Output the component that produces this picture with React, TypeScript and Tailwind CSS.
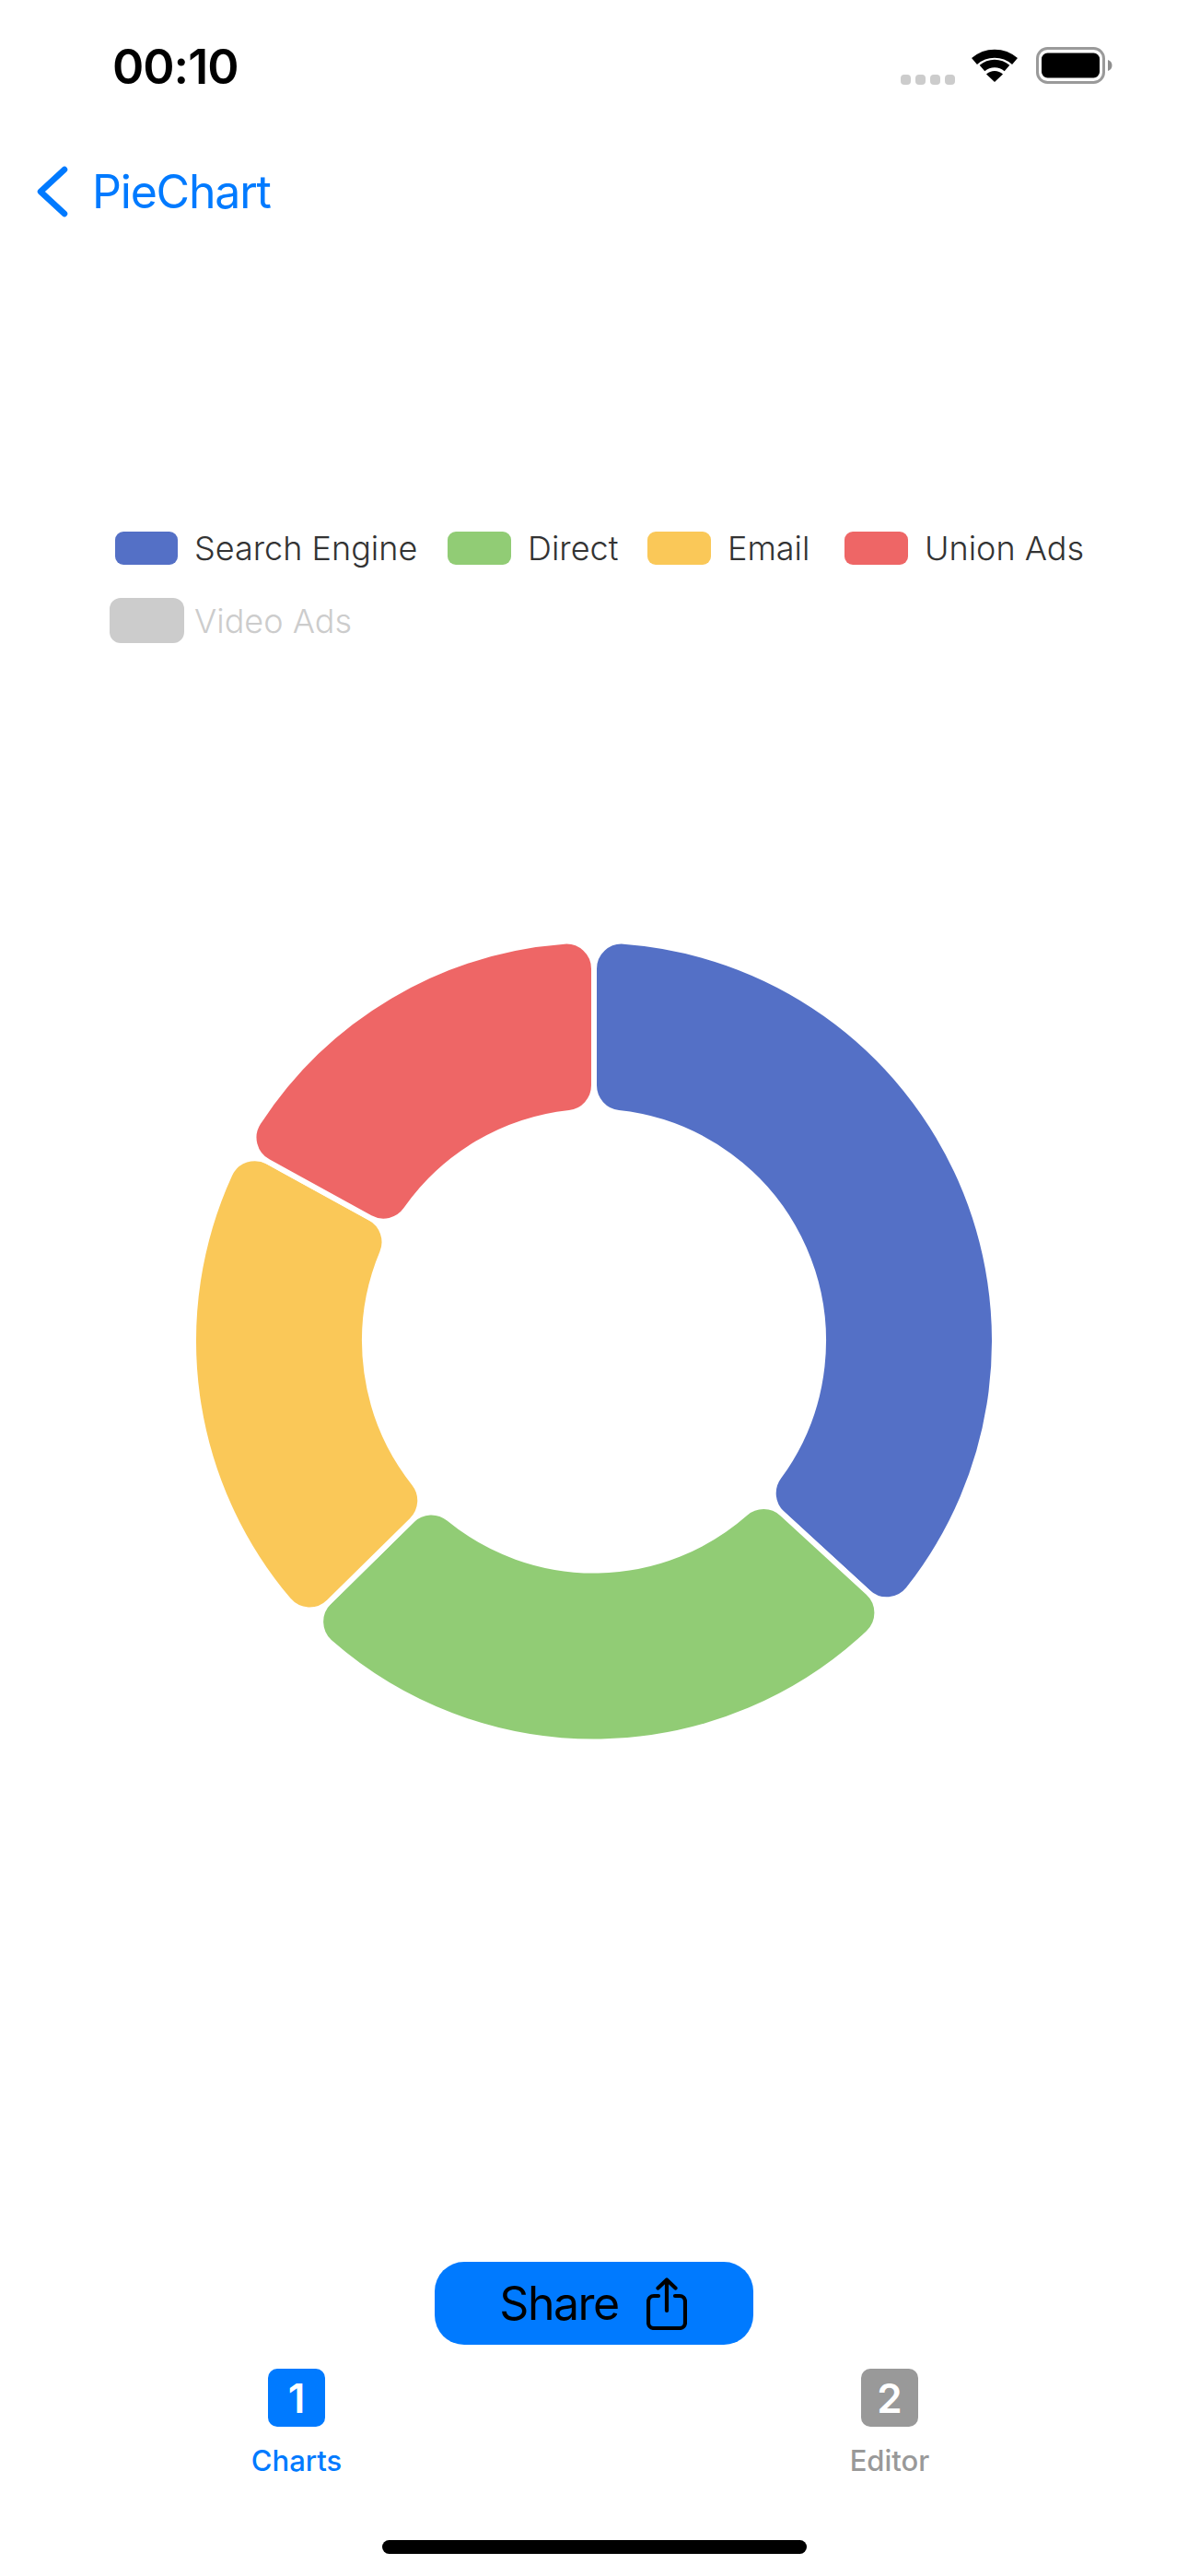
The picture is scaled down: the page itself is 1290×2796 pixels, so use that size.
const slices = [
  { color: "#5470c6", from: 0, to: 132.52 },
  { color: "#91cc75", from: 132.52, to: 225.46 },
  { color: "#fac858", from: 225.46, to: 298.8 },
  { color: "#ee6666", from: 298.8, to: 360 },
];

const CX = 645;
const CY = 499.5;
const R = 435;
const INNER = 249;
const CORNER = 30;

const pt = (radius: number, deg: number) => {
  const a = (deg * Math.PI) / 180;
  return `${(CX + radius * Math.sin(a)).toFixed(2)} ${(CY - radius * Math.cos(a)).toFixed(2)}`;
};

// annular sector with rounded corners, angles in degrees clockwise from 12 o'clock
const sectorPath = (from: number, to: number) => {
  const dOut = R - CORNER;
  const dIn = INNER + CORNER;
  const dO = (Math.asin(CORNER / dOut) * 180) / Math.PI;
  const dI = (Math.asin(CORNER / dIn) * 180) / Math.PI;
  const edgeO = Math.sqrt(dOut * dOut - CORNER * CORNER);
  const edgeI = Math.sqrt(dIn * dIn - CORNER * CORNER);
  const big = to - from > 180 ? 1 : 0;
  return [
    `M ${pt(edgeO, from)}`,
    `A ${CORNER} ${CORNER} 0 0 1 ${pt(R, from + dO)}`,
    `A ${R} ${R} 0 ${big} 1 ${pt(R, to - dO)}`,
    `A ${CORNER} ${CORNER} 0 0 1 ${pt(edgeO, to)}`,
    `L ${pt(edgeI, to)}`,
    `A ${CORNER} ${CORNER} 0 0 1 ${pt(INNER, to - dI)}`,
    `A ${INNER} ${INNER} 0 ${big} 0 ${pt(INNER, from + dI)}`,
    `A ${CORNER} ${CORNER} 0 0 1 ${pt(edgeI, from)}`,
    "Z",
  ].join(" ");
};

const Wifi = () => (
  <svg width="50" height="38" viewBox="0 0 50 38" fill="none">
    <path d="M3 15.5 A33.5 33.5 0 0 1 47 15.5" stroke="#000" strokeWidth="9" />
    <path d="M11.5 23 A20.5 20.5 0 0 1 38.5 23" stroke="#000" strokeWidth="8.5" />
    <path d="M25 38 L16 29.5 A13 13 0 0 1 34 29.5 Z" fill="#000" />
  </svg>
);

const Battery = () => (
  <svg width="83" height="40" viewBox="0 0 83 40" fill="none">
    <rect x="1.5" y="1.5" width="72" height="37" rx="11" stroke="#9a9a9a" strokeWidth="3" />
    <rect x="6" y="6.5" width="63" height="27" rx="6.5" fill="#000" />
    <path d="M78 14 C81 15 82.5 17 82.5 20 C82.5 23 81 25 78 26 Z" fill="#8e8e8e" />
  </svg>
);

const ShareIcon = () => (
  <svg width="44" height="57" viewBox="0 0 44 57" fill="none" stroke="#000" strokeWidth="4.2" strokeLinecap="round" strokeLinejoin="round">
    <path d="M13 20 H8 a6 6 0 0 0 -6 6 V49 a6 6 0 0 0 6 6 H36 a6 6 0 0 0 6 -6 V26 a6 6 0 0 0 -6 -6 H31" />
    <path d="M22 36 V3" />
    <path d="M12.5 11.5 L22 2.5 L31.5 11.5" />
  </svg>
);

const App = () => {
  return (
    <div className="w-[1290px] h-[2796px] bg-white flex flex-col font-['Inter','Liberation_Sans',sans-serif]">
      <div className="h-[140px] flex items-start pt-[51px] pl-[122px] pr-[82px]">
        <span className="text-[52px] leading-[44px] font-semibold tracking-[-1px] text-black">00:10</span>
        <div className="ml-auto flex items-start">
          <div className="flex gap-[5px] mt-[30px] mr-[18px]">
            <div className="w-[11px] h-[11px] rounded-[4px] bg-[#cccccc]" />
            <div className="w-[11px] h-[11px] rounded-[4px] bg-[#cccccc]" />
            <div className="w-[11px] h-[11px] rounded-[4px] bg-[#cccccc]" />
            <div className="w-[11px] h-[11px] rounded-[4px] bg-[#cccccc]" />
          </div>
          <Wifi />
          <div className="ml-[20px]">
            <Battery />
          </div>
        </div>
      </div>

      <div className="h-[136px] flex items-center pl-[40px] gap-[26px]">
        <svg width="34" height="56" viewBox="0 0 34 56" fill="none" stroke="#007aff" strokeWidth="6.5" strokeLinecap="round" strokeLinejoin="round">
          <path d="M30 4 L4 28 L30 52" />
        </svg>
        <span className="text-[50px] leading-none tracking-[-1.2px] text-[#007aff]">PieChart</span>
      </div>

      <div className="mt-[301px] h-[36px] flex items-center pl-[125px] text-[36px] font-light text-[#333333]">
        <div className="w-[68px] h-[36px] rounded-[9px] bg-[#5470c6]" />
        <span className="ml-[18px] w-[243px] mr-[32px] whitespace-nowrap">Search Engine</span>
        <div className="w-[69px] h-[36px] rounded-[9px] bg-[#91cc75]" />
        <span className="ml-[18px] w-[99px] mr-[31px] whitespace-nowrap">Direct</span>
        <div className="w-[69px] h-[36px] rounded-[9px] bg-[#fac858]" />
        <span className="ml-[18px] w-[91px] mr-[36px] whitespace-nowrap">Email</span>
        <div className="w-[69px] h-[36px] rounded-[9px] bg-[#ee6666]" />
        <span className="ml-[18px] whitespace-nowrap">Union Ads</span>
      </div>
      <div className="mt-[36px] h-[49px] flex items-center pl-[119px] text-[36px] font-light text-[#cccccc]">
        <div className="w-[81px] h-[49px] rounded-[12px] bg-[#cccccc]" />
        <span className="ml-[11px]">Video Ads</span>
      </div>

      <svg className="mt-[258px] shrink-0" width="1290" height="1000" viewBox="0 0 1290 1000">
        {slices.map((s) => (
          <path key={s.color} d={sectorPath(s.from, s.to)} fill={s.color} stroke="#ffffff" strokeWidth="6" strokeLinejoin="round" />
        ))}
      </svg>

      <div className="mt-[499px] flex justify-center">
        <button className="w-[346px] h-[90px] rounded-[32px] bg-[#007aff] flex items-center justify-center gap-[30px] text-[50px] tracking-[-1.5px] text-black pr-[2px]">
          <span className="leading-none">Share</span>
          <ShareIcon />
        </button>
      </div>

      <div className="mt-[26px] grid grid-cols-2 pr-[2px]">
        <div className="flex flex-col items-center">
          <div className="w-[62px] h-[63px] rounded-[10px] bg-[#007aff] flex items-center justify-center text-[44px] font-semibold text-white">1</div>
          <span className="mt-[19px] text-[31px] leading-[36px] font-medium text-[#007aff]">Charts</span>
        </div>
        <div className="flex flex-col items-center">
          <div className="w-[62px] h-[63px] rounded-[10px] bg-[#999999] flex items-center justify-center text-[44px] font-semibold text-white">2</div>
          <span className="mt-[19px] text-[31px] leading-[36px] font-medium text-[#999999]">Editor</span>
        </div>
      </div>

      <div className="mt-auto mb-[24px] flex justify-center">
        <div className="w-[461px] h-[15px] rounded-full bg-black" />
      </div>
    </div>
  );
};

export default App;
